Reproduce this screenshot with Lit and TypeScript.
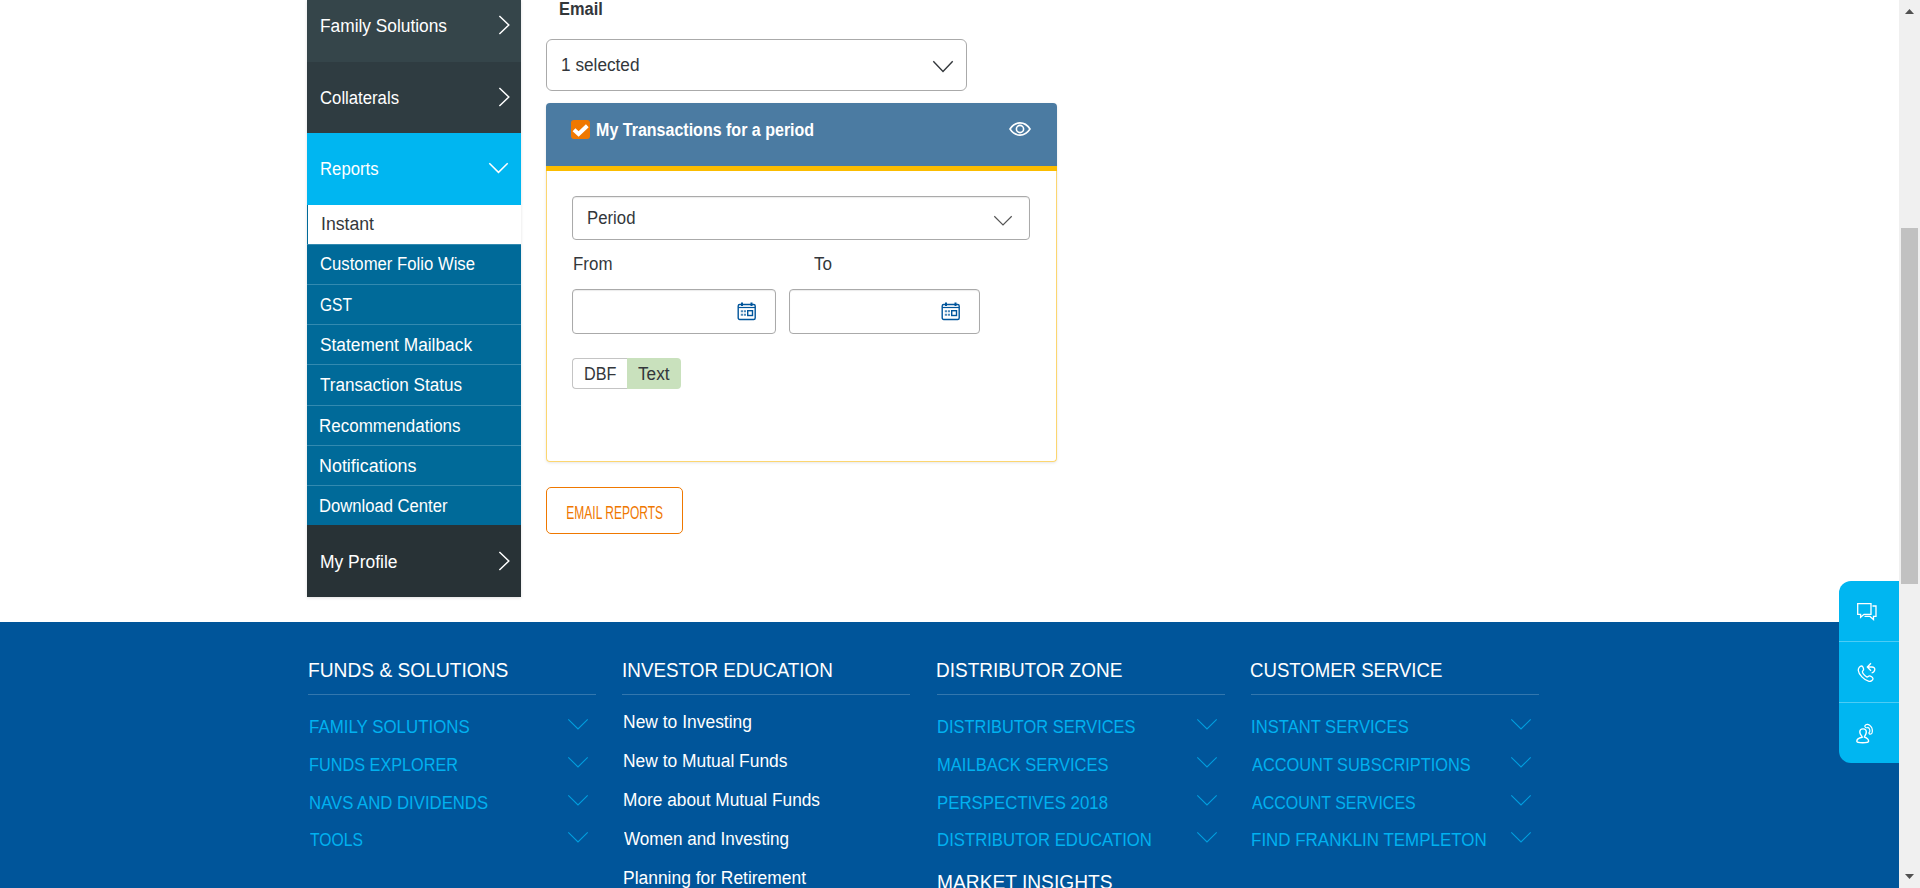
import { LitElement, html, css } from "lit";
import { customElement, property } from "lit/decorators.js";
import { classMap } from "lit/directives/class-map.js";

const ctx = document.createElement("canvas").getContext("2d")!;

/** A single line of text whose drawn width is `w` pixels. */
@customElement("fit-label")
class FitLabel extends LitElement {
  @property() text = "";
  @property({ type: Number }) w = 0;
  @property({ type: Number }) size = 18;
  @property() weight = "400";
  @property() face = "Liberation Sans";

  static styles = css`
    :host { display: block; white-space: nowrap; flex: none; }
    .t { display: inline-block; transform-origin: 0 50%; white-space: pre; }
  `;

  render() {
    ctx.font = `${this.weight} ${this.size}px "${this.face}"`;
    const m = ctx.measureText(this.text);
    const s = this.w / (m.actualBoundingBoxLeft + m.actualBoundingBoxRight);
    const dx = m.actualBoundingBoxLeft * s;
    return html`<span class="t" style="font:${this.weight} ${this.size}px '${this.face}',sans-serif;line-height:inherit;width:${this.w}px;transform:translateX(${dx}px) scaleX(${s})">${this.text}</span>`;
  }
}

const chev = (w: number, h: number, sw: number) => html`<svg class="chev" width=${w + 2} height=${h + 2} viewBox="-1 -1 ${w + 2} ${h + 2}" fill="none" stroke="currentColor" stroke-width=${sw}><path d=${`M.3 .3L${w / 2} ${h - 0.6}L${w - 0.3} .3`} /></svg>`;
const right = html`<svg class="right" width="12" height="20" viewBox="0 0 12 20" fill="none" stroke="currentColor" stroke-width="1.5"><path d="M1.4 1L10.8 10L1.4 19" /></svg>`;
const calendar = html`<svg class="cal" width="20" height="19" viewBox="0 0 20 19" fill="none" stroke="#00559b"><rect x="1.2" y="2.5" width="17" height="15" rx="1.5" stroke-width="1.4" /><path d="M1.2 5.5H18.2" stroke-width="1.2" /><path d="M5 .5V4M14.5 .5V4" stroke-width="2" /><rect x="10.7" y="8.7" width="4.8" height="4.8" stroke-width="1.4" /><path d="M3.8 9.3H6M6.8 9.3H9M3.8 12.7H6M6.8 12.7H9" stroke-width="2" opacity=".7" /></svg>`;

type Label = [string, number];
const subs: Label[] = [["Customer Folio Wise", 155], ["GST", 32], ["Statement Mailback", 153], ["Transaction Status", 142], ["Recommendations", 140.5], ["Notifications", 96.5], ["Download Center", 127.5]];
const columns: { title: Label; links?: boolean; items: Label[]; extra?: Label }[] = [
  { title: ["FUNDS & SOLUTIONS", 199], items: [["FAMILY SOLUTIONS", 160], ["FUNDS EXPLORER", 148], ["NAVS AND DIVIDENDS", 179], ["TOOLS", 53]] },
  { title: ["INVESTOR EDUCATION", 208.5], links: true, items: [["New to Investing", 127], ["New to Mutual Funds", 163.5], ["More about Mutual Funds", 196], ["Women and Investing", 164], ["Planning for Retirement", 182]] },
  { title: ["DISTRIBUTOR ZONE", 185], items: [["DISTRIBUTOR SERVICES", 197.5], ["MAILBACK SERVICES", 170.5], ["PERSPECTIVES 2018", 170], ["DISTRIBUTOR EDUCATION", 213]], extra: ["MARKET INSIGHTS", 174.5] },
  { title: ["CUSTOMER SERVICE", 191], items: [["INSTANT SERVICES", 157], ["ACCOUNT SUBSCRIPTIONS", 219], ["ACCOUNT SERVICES", 164], ["FIND FRANKLIN TEMPLETON", 234]] },
];

@customElement("app-root")
class AppRoot extends LitElement {
  static styles = css`
    :host { display: block; position: relative; width: 1920px; height: 888px; overflow: hidden; background: #fff; font-family: "Liberation Sans", Arial, sans-serif; color: #33373b; }
    * { box-sizing: border-box; }
    svg { display: block; flex: none; }
    .page { width: 1899px; height: 888px; display: flex; flex-direction: column; }
    .top { height: 622px; flex: none; display: flex; padding-left: 307px; }
    .side { width: 214px; height: 597px; color: #fff; display: flex; flex-direction: column; box-shadow: 0 1px 3px rgba(0,0,0,.12); }
    .item { display: flex; justify-content: space-between; padding: 0 11px 0 13.5px; height: 72px; line-height: 72px; flex: none; }
    .right { margin-top: 25px; }
    .family { height: 62px; line-height: 52px; background: #35454a; }
    .family .right { margin-top: 15px; }
    .collat { height: 71px; background: #2f3c41; padding-left: 12.5px; }
    .reports { background: #00b6f1; }
    .reports .chev { margin: 29px 1px 0 0; }
    .instant { height: 39px; flex: none; background: #fff; border-left: 1px solid #006a99; color: #33373b; padding-left: 14px; line-height: 38px; }
    .sub { flex: 1; min-height: 0; background: #006a99; border-top: 1px solid #338ab0; padding-left: 13px; line-height: 41px; }
    .instant + .sub { line-height: 39px; }
    .profile { background: #283236; line-height: 75px; }
    .profile .right { margin-top: 26px; }
    .main { margin-left: 25px; width: 512px; display: flex; flex-direction: column; }
    .email { height: 39px; line-height: 18px; padding-left: 14px; }
    .pick { width: 421px; height: 52px; border: 1px solid #aaa; border-radius: 6px; display: flex; justify-content: space-between; padding: 0 12px 0 15px; line-height: 50px; }
    .pick .chev { margin-top: 20px; }
    .card { margin-top: 12px; height: 359px; border-radius: 4px; box-shadow: 0 1px 3px rgba(0,0,0,.1); width: 511px; }
    .head { height: 68px; background: #4b7ba2; border-bottom: 5px solid #fbbc00; border-radius: 4px 4px 0 0; padding: 17px 26px 0 25px; color: #fff; display: flex; align-items: flex-start; }
    .check { width: 19px; height: 19px; background: #ef7800; border-radius: 3px; margin-right: 7px; }
    .head fit-label { line-height: 20px; }
    .eye { margin: 2.3px 0 0 auto; }
    .body { height: 291px; border: 1px solid #fcd670; border-top: 0; border-radius: 0 0 4px 4px; padding: 25px 26px 0 25px; }
    .field { border: 1px solid #aaa; border-radius: 4px; box-shadow: inset 0 1px 1px rgba(0,0,0,.08); display: flex; justify-content: space-between; }
    .period { height: 44px; width: 458px; padding: 0 16px 0 15px; line-height: 43px; }
    .period .chev { margin-top: 18px; color: #555; }
    .names { display: flex; height: 49px; line-height: 48px; padding-left: 1.5px; }
    .names fit-label:first-child { margin-right: 202.5px; }
    .dates { display: flex; gap: 13px; }
    .date { height: 45px; width: 204px; padding: 12px 18px 0 0; justify-content: flex-end; }
    .date.b { width: 191px; }
    .toggle { margin-top: 24px; width: 109px; height: 31px; display: flex; line-height: 30px; }
    .dbf { width: 55px; border: 1px solid #c4c4c4; border-right: 0; border-radius: 4px 0 0 4px; padding-left: 12px; line-height: 30px; }
    .txt { width: 54px; background: #c9e1bd; border-radius: 0 4px 4px 0; padding-left: 11px; line-height: 32px; }
    .send { margin-top: 25px; width: 137px; height: 47px; border: 1px solid #ef7800; border-radius: 5px; color: #ef7800; line-height: 50px; padding-left: 20px; }
    .foot { flex: 1; background: #00559a; padding-left: 308px; display: grid; grid-template-columns: repeat(4, 288px); column-gap: 26.3px; overflow: hidden; }
    .col { color: #fff; }
    .title { height: 73px; line-height: 97px; border-bottom: 1px solid #3377ae; overflow: visible; padding-left: .5px; }
    .acc { padding: 13px 0 0 1.5px; color: #00b1f0; height: 173px; }
    .row { height: 37.8px; line-height: 39px; display: flex; justify-content: space-between; padding-right: 7px; }
    .row .chev { margin-top: 10px; opacity: .8; }
    .links { padding: 7px 0 0 2px; }
    .link { height: 39px; line-height: 41px; }
    .extra { line-height: 28px; padding-left: 1px; }
    .float { position: absolute; left: 1839px; top: 581px; width: 60px; height: 182px; background: #00b6f1; border-radius: 12px 0 0 12px; color: #fff; display: flex; flex-direction: column; }
    .fi { flex: 1; padding: 20px 0 0 17px; border-top: 1px solid #4dccf5; }
    .fi:first-child { border-top: 0; }
    .bar { position: absolute; left: 1899px; top: 0; width: 21px; height: 888px; background: #f0f0f0; padding: 9px 0 0 2px; display: flex; flex-direction: column; }
    .arrow { margin-left: 4px; }
    .thumb { margin: 214px 0 290px; width: 17px; height: 356px; flex: none; background: #c1c1c1; }
  `;

  label(l: Label, size = 18, weight = "400") {
    return html`<fit-label .text=${l[0]} .w=${l[1]} .size=${size} .weight=${weight}></fit-label>`;
  }

  render() {
    return html`
      <div class="page">
        <div class="top">
          <nav class="side">
            <div class="item family">${this.label(["Family Solutions", 126])}${right}</div>
            <div class="item collat">${this.label(["Collaterals", 79])}${right}</div>
            <div class="item reports">${this.label(["Reports", 57.5])}${chev(19, 10, 1.5)}</div>
            <div class="instant">${this.label(["Instant", 52])}</div>
            ${subs.map((s) => html`<div class="sub">${this.label(s)}</div>`)}
            <div class="item profile">${this.label(["My Profile", 76.5])}${right}</div>
          </nav>
          <main class="main">
            <div class="email">${this.label(["Email", 42], 17.5, "700")}</div>
            <div class="pick">${this.label(["1 selected", 76.5])}${chev(20, 11, 1.4)}</div>
            <section class="card">
              <div class="head">
                <div class="check"><svg width="19" height="19" fill="none" stroke="#fff" stroke-width="4"><path d="M3 9.7L7.6 14L16.3 5.7" /></svg></div>
                ${this.label(["My Transactions for a period", 216.5], 17.5, "700")}
                <svg class="eye" width="22" height="14" viewBox="0 0 22 14" fill="none" stroke="#fff" stroke-width="1.6"><path d="M1 7Q5 .9 11 .9T21 7Q17 13.1 11 13.1T1 7Z" /><circle cx="11" cy="7" r="3.6" /></svg>
              </div>
              <div class="body">
                <div class="field period">${this.label(["Period", 46.5])}${chev(18, 9.5, 1.2)}</div>
                <div class="names">${this.label(["From", 37.5])}${this.label(["To", 18])}</div>
                <div class="dates"><div class="field date">${calendar}</div><div class="field date b">${calendar}</div></div>
                <div class="toggle"><div class="dbf">${this.label(["DBF", 31.5])}</div><div class="txt">${this.label(["Text", 31.5])}</div></div>
              </div>
            </section>
            <div class="send">${this.label(["EMAIL REPORTS", 96.5])}</div>
          </main>
        </div>
        <footer class="foot">
          ${columns.map((c) => html`<div class="col">
            <div class="title">${this.label(c.title, 20)}</div>
            <div class=${classMap({ acc: !c.links, links: !!c.links })}>
              ${c.items.map((i) => c.links ? html`<div class="link">${this.label(i)}</div>` : html`<div class="row">${this.label(i)}${chev(20, 10.5, 1.1)}</div>`)}
            </div>
            ${c.extra ? html`<div class="extra">${this.label(c.extra, 20)}</div>` : ""}
          </div>`)}
        </footer>
      </div>
      <div class="float">
        <div class="fi"><svg width="22" height="20" viewBox="0 0 22 20" fill="none" stroke="#fff" stroke-width="1.3"><path d="M1.7 2.7H15V13.3H8L4.6 16.3V13.3H1.7Z" /><path d="M16.5 5H20V15.4H17.5V18.5L14 15.4H8.5" /></svg></div>
        <div class="fi"><svg width="22" height="22" viewBox="0 0 22 22" fill="none" stroke="#fff" stroke-width="1.3"><path d="M5.5 4C4 4 2 6 2.3 8.5C2.6 12 8 18.5 13 19.3C15 19.6 17 18 17 16.8C17 15.6 14.5 13.8 13.4 13.8C12.4 13.8 12 15.2 11 15C9.5 14.6 6.6 11.4 6.4 10C6.3 9 7.7 8.4 7.6 7.2C7.5 6 6.5 4 5.5 4Z" /><path d="M15 1.2L11.3 5L15 8.8M11.5 5H16C19.8 5 19.8 9.6 15.6 11" /></svg></div>
        <div class="fi"><svg width="22" height="22" viewBox="0 0 22 22" fill="none" stroke="#fff" stroke-width="1.4"><path d="M6.2 14.2C2.1 15 .8 16.2 .8 18.2C.8 20.2 12.6 20.2 12.6 18.2C12.6 16.2 11 15 8.4 14.2C8.4 13 10.3 11.8 10.3 9C10.3 4.8 3.8 4.8 3.8 9C3.8 11.8 6.2 13 6.2 14.2Z" /><path d="M9 2.6C11-.6 17 2.5 16.3 9C16 12 12.6 11.6 13 9.6C14.6 9 14 5 11.8 4.4C10.5 5.2 8.2 4.4 9 2.6Z" stroke-width="1.2" /></svg></div>
      </div>
      <div class="bar">
        <svg class="arrow" width="9" height="5"><path d="M4.5 0L9 5H0Z" fill="#505050" /></svg>
        <div class="thumb"></div>
        <svg class="arrow" width="9" height="5"><path d="M4.5 5L9 0H0Z" fill="#505050" /></svg>
      </div>
    `;
  }
}
